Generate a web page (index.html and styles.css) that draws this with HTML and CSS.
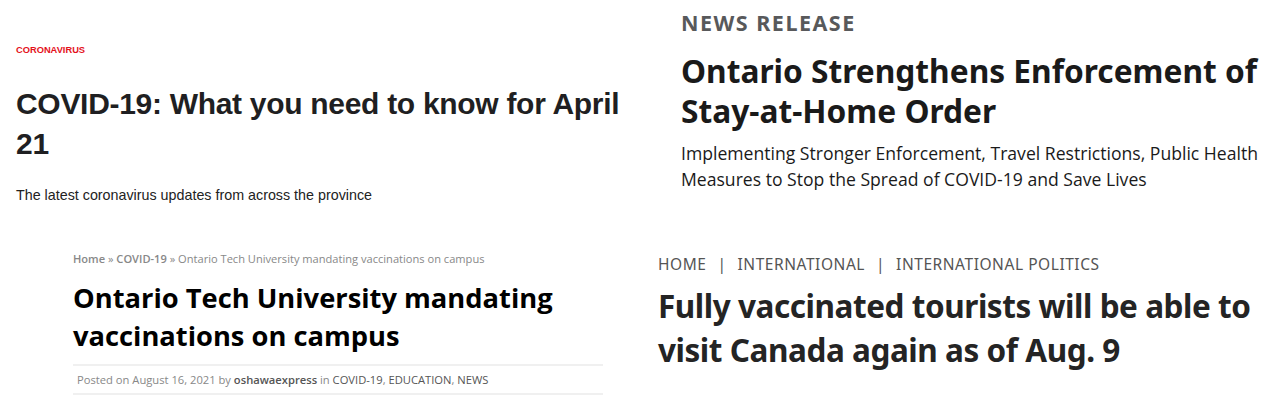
FILE: index.html
```html
<!DOCTYPE html>
<html lang="en">
<head>
<meta charset="utf-8">
<title>COVID-19 headlines</title>
<link rel="stylesheet" href="styles.css">
</head>
<body>
<main class="grid">
  <section class="card card-cbc">
    <div class="kicker">CORONAVIRUS</div>
    <h1 class="cbc-title">COVID-19: What you need to know for April 21</h1>
    <p class="cbc-sub">The latest coronavirus updates from across the province</p>
  </section>
  <section class="card card-ont">
    <div class="ont-label">NEWS RELEASE</div>
    <h1 class="ont-title">Ontario Strengthens Enforcement of Stay-at-Home Order</h1>
    <p class="ont-sub">Implementing Stronger Enforcement, Travel Restrictions, Public Health Measures to Stop the Spread of COVID-19 and Save Lives</p>
  </section>
  <section class="card card-osh">
    <div class="osh-crumbs"><b>Home</b> » <b>COVID-19</b> » Ontario Tech University mandating vaccinations on campus</div>
    <h1 class="osh-title">Ontario Tech University mandating vaccinations on campus</h1>
    <div class="osh-meta">Posted on August 16, 2021 by <b>oshawaexpress</b> in <span class="cat">COVID-19</span>, <span class="cat">EDUCATION</span>, <span class="cat">NEWS</span></div>
  </section>
  <section class="card card-ctv">
    <div class="ctv-crumbs"><span>HOME</span><span class="sep">|</span><span>INTERNATIONAL</span><span class="sep">|</span><span>INTERNATIONAL POLITICS</span></div>
    <h1 class="ctv-title">Fully vaccinated tourists will be able to visit Canada again as of Aug. 9</h1>
  </section>
</main>
</body>
</html>
```
FILE: styles.css
```css
html, body {
  margin: 0;
  padding: 0;
  background: #ffffff;
}
.grid {
  display: grid;
  grid-template-columns: 643px 644px;
  grid-template-rows: 218px 184px;
  width: 1287px;
  height: 402px;
}
.card h1, .card p { margin: 0; }

/* top-left */
.card-cbc {
  padding: 44px 0 0 16px;
  font-family: "Liberation Sans", Arial, sans-serif;
}
.kicker {
  color: #e4111b;
  font-size: 9.3px;
  font-weight: 700;
  line-height: 12px;
}
.cbc-title {
  margin-top: 28px !important;
  font-size: 30px;
  font-weight: 700;
  line-height: 40px;
  color: #1f1f22;
  letter-spacing: -0.3px;
  width: 615px;
}
.cbc-sub {
  margin-top: 22px !important;
  font-size: 14.3px;
  line-height: 18px;
  color: #222;
}

/* top-right */
.card-ont {
  padding: 9px 0 0 38px;
}
.ont-label {
  font-family: "Noto Sans", sans-serif;
  font-size: 21.5px;
  font-weight: 700;
  line-height: 28px;
  letter-spacing: 1.5px;
  color: #58595b;
}
.ont-title {
  margin-top: 14px !important;
  font-family: "Noto Sans", sans-serif;
  font-size: 31.7px;
  font-weight: 700;
  line-height: 40px;
  color: #1a1a1a;
  width: 600px;
}
.ont-sub {
  margin-top: 9px !important;
  font-family: "Open Sans", sans-serif;
  font-size: 17.6px;
  line-height: 26px;
  color: #1a1a1a;
  width: 600px;
}

/* bottom-left */
.card-osh {
  padding: 33px 0 0 73px;
  font-family: "Open Sans", sans-serif;
}
.osh-crumbs {
  font-size: 11.1px;
  line-height: 16px;
  color: #888;
}
.osh-crumbs b { font-weight: 600; }
.osh-title {
  margin-top: 12px !important;
  font-size: 27.3px;
  font-weight: 700;
  line-height: 38px;
  color: #000;
  width: 530px;
  padding-bottom: 9px;
  border-bottom: 2px solid #f0f0f0;
}
.osh-meta {
  width: 530px;
  padding: 6px 0 5px 4px;
  box-sizing: border-box;
  font-size: 11.2px;
  line-height: 16px;
  color: #888;
  border-bottom: 2px solid #f0f0f0;
}
.osh-meta b { font-weight: 600; color: #555; }
.osh-meta .cat { color: #555; }

/* bottom-right */
.card-ctv {
  padding: 36px 0 0 15px;
  font-family: "Noto Sans", sans-serif;
}
.ctv-crumbs {
  display: flex;
  gap: 11px;
  font-size: 15.5px;
  line-height: 20px;
  letter-spacing: 0.55px;
  color: #555;
}
.ctv-title {
  margin-top: 10px !important;
  font-size: 31.5px;
  font-weight: 700;
  line-height: 44px;
  letter-spacing: -0.45px;
  color: #242424;
  width: 610px;
}
```
